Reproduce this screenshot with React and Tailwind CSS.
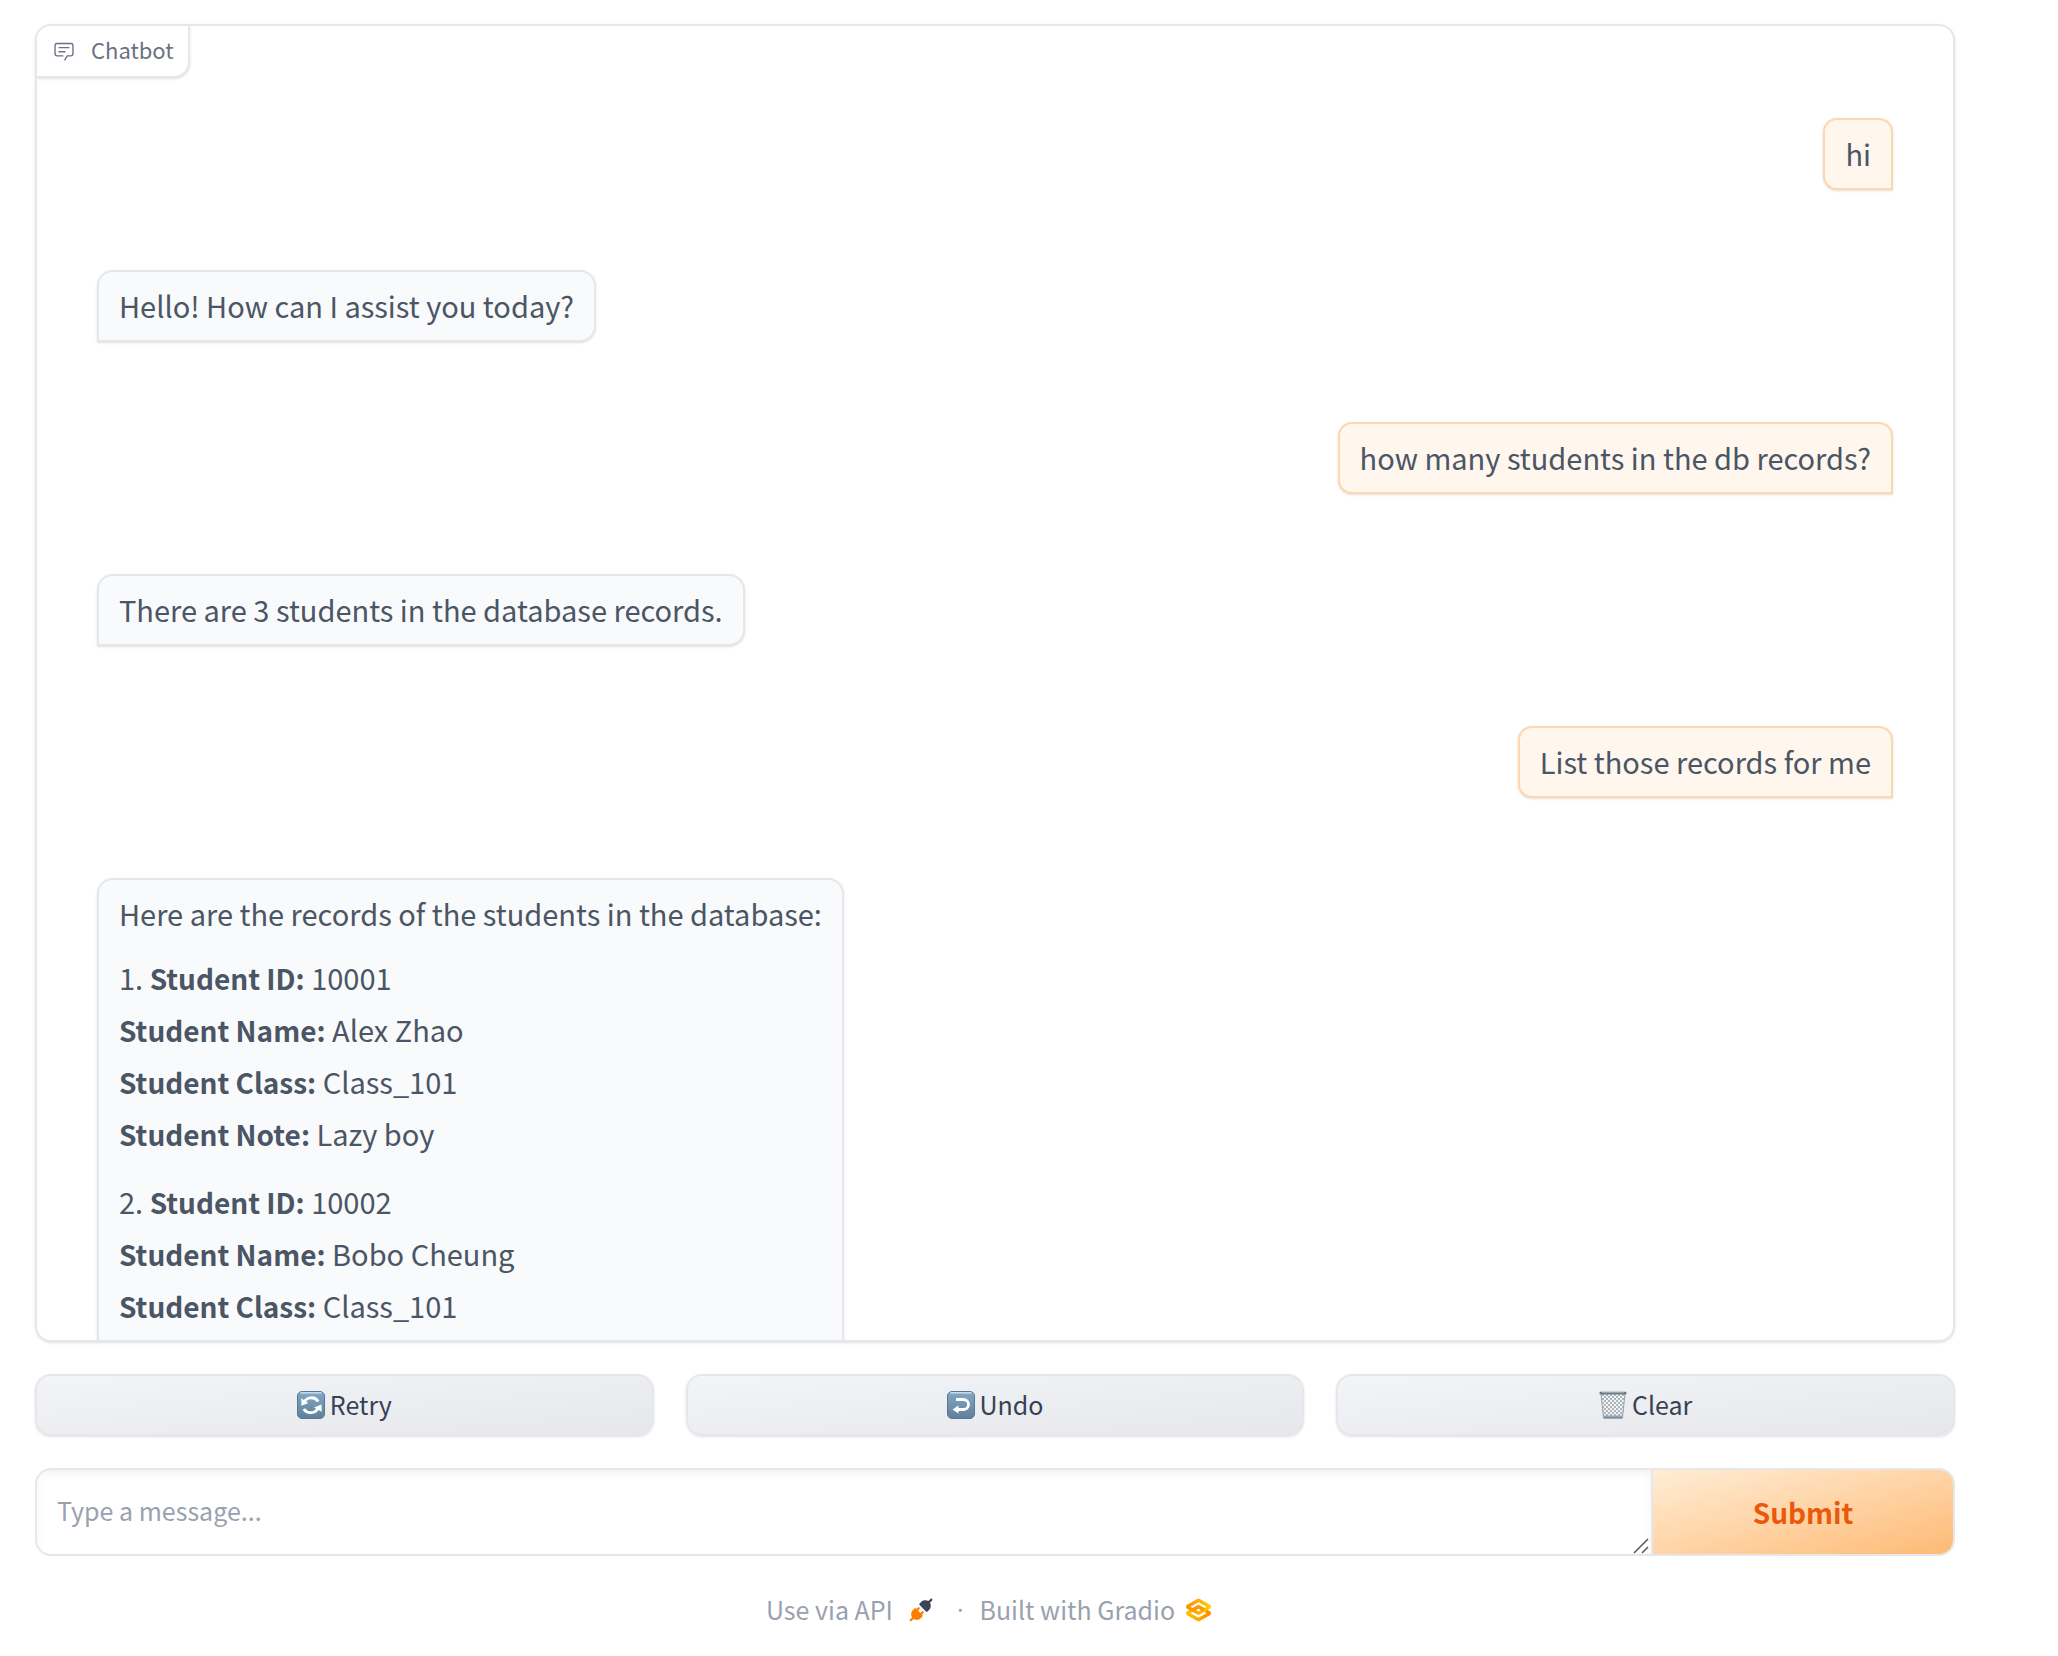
import React from "react";

const FONT = "font-['Noto_Sans_CJK_SC',sans-serif]";

function ChatIcon() {
  return (
    <svg viewBox="0 0 32 32" className="size-[22px]" fill="currentColor" aria-hidden="true">
      <path d="M17.74 30L16 29l4-7h6a2 2 0 0 0 2-2V8a2 2 0 0 0-2-2H6a2 2 0 0 0-2 2v12a2 2 0 0 0 2 2h9v2H6a4 4 0 0 1-4-4V8a4 4 0 0 1 4-4h20a4 4 0 0 1 4 4v12a4 4 0 0 1-4 4h-4.84Z" />
      <path d="M8 10h16v2H8zm0 6h10v2H8z" />
    </svg>
  );
}

function Tile({ id, children }) {
  return (
    <svg viewBox="0 0 28 28" className="size-7" aria-hidden="true">
      <defs>
        <linearGradient id={id} x1="0" y1="0" x2="0" y2="1">
          <stop offset="0" stopColor="#8fb0cb" />
          <stop offset="0.15" stopColor="#7ea2c0" />
          <stop offset="1" stopColor="#5f7f9b" />
        </linearGradient>
      </defs>
      <rect x="0.5" y="0.5" width="27" height="27" rx="4.5" fill={`url(#${id})`} stroke="#587793" />
      <path d="M4 1.8h20" stroke="#c6dbea" strokeWidth="1.4" strokeLinecap="round" />
      {children}
    </svg>
  );
}

function RetryIcon() {
  return (
    <Tile id="tile-retry">
      <g fill="none" stroke="#fff" strokeWidth="3">
        <path d="M7 11.5C9.5 6 17.5 5 21.2 10.5" />
        <path d="M21 17C18.5 22.6 10.5 23.4 6.8 18" />
      </g>
      <path d="M4.2 7.3l.3 7.4 6.8-2.6z" fill="#fff" />
      <path d="M24.500 13.500l.2 7.300-7.800-4.400z" fill="#fff" />
    </Tile>
  );
}

function UndoIcon() {
  return (
    <Tile id="tile-undo">
      <path d="M9 8.500h7.500a5 5 0 0 1 0 10H11" fill="none" stroke="#fff" strokeWidth="2.800" />
      <path d="M5.500 18.500l6-4v8z" fill="#fff" />
    </Tile>
  );
}

function TrashIcon() {
  return (
    <svg viewBox="0 0 28 28" className="size-7" aria-hidden="true">
      <defs>
        <pattern id="wire-mesh" width="4" height="4" patternUnits="userSpaceOnUse">
          <rect width="4" height="4" fill="#f1f3f4" />
          <path d="M0 0l4 4M4 0L0 4" stroke="#9aa3aa" strokeWidth="0.8" />
        </pattern>
      </defs>
      <path d="M2 2.500h24L23.500 26.500H4.500z" fill="url(#wire-mesh)" stroke="#97a2aa" />
      <path d="M4.300 24.500h19.400l-.4 2.700H4.700z" fill="#8ea6ba" />
      <path d="M4.500 27h19" stroke="#6d7780" />
      <rect x="0.500" y="0.800" width="27" height="2.600" rx="1" fill="#6e7a84" />
      <path d="M3 1.500h22" stroke="#a3b2be" strokeWidth="0.800" />
    </svg>
  );
}

function PlugIcon() {
  return (
    <svg viewBox="0 0 28 28" className="size-6" aria-hidden="true">
      <path
        fill="#3c4555"
        d="M26.9425 2.94265C27.4632 2.42195 27.4632 1.57773 26.9425 1.05703C26.4218 0.536329 25.5776 0.536329 25.0569 1.05703L22.5713 3.54256C21.1213 2.59333 19.5367 2.43378 18.1753 2.64006C16.5495 2.88638 15.1127 3.66838 14.3905 4.39053L12.3905 6.39053C12.1405 6.64058 12 6.97972 12 7.33334C12 7.68697 12.1405 8.0261 12.3905 8.27615L19.7239 15.6095C20.2446 16.1302 21.0888 16.1302 21.6095 15.6095L23.6095 13.6095C24.3316 12.8873 25.1136 11.4505 25.36 9.82475C25.5663 8.46312 25.4066 6.87827 24.4571 5.42807L26.9425 2.94265Z"
      />
      <path
        fill="#ff7c00"
        d="M12.276 12.9426C12.7967 12.4219 12.7967 11.5777 12.276 11.057C11.7553 10.5363 10.9111 10.5363 10.3904 11.057L8.6665 12.7809L8.2761 12.3905C7.7554 11.8698 6.9112 11.8698 6.3905 12.3905L4.3905 14.3905C3.6684 15.1127 2.8864 16.5495 2.64 18.1752C2.4338 19.5368 2.5933 21.1216 3.5426 22.5713L1.057 25.0569C0.5363 25.5776 0.5363 26.4218 1.057 26.9425C1.5777 27.4632 2.4219 27.4632 2.9426 26.9425L5.4282 24.4571C6.8784 25.4066 8.4632 25.5663 9.8248 25.36C11.4505 25.1136 12.8873 24.3316 13.6095 23.6095L15.6095 21.6095C16.1302 21.0888 16.1302 20.2446 15.6095 19.7239L15.2188 19.3332L16.9426 17.6093C17.4633 17.0886 17.4633 16.2444 16.9426 15.7237C16.4219 15.203 15.5777 15.203 15.057 15.7237L13.3332 17.4475L10.5521 14.6665L12.276 12.9426Z"
      />
    </svg>
  );
}

function GradioLogo() {
  return (
    <svg viewBox="50 78 475 420" className="h-6 w-[27px]" fill="none" aria-hidden="true">
      <defs>
        <linearGradient id="logo-top" x1="86" y1="231" x2="489" y2="231" gradientUnits="userSpaceOnUse">
          <stop stopColor="#ff8f00" />
          <stop offset="1" stopColor="#ffd000" />
        </linearGradient>
        <linearGradient id="logo-bottom" x1="86" y1="344" x2="489" y2="344" gradientUnits="userSpaceOnUse">
          <stop stopColor="#ffc400" />
          <stop offset="1" stopColor="#ff8a00" />
        </linearGradient>
      </defs>
      <path d="M287.5 229L86 344.5L287.5 460L489 344.5Z" stroke="url(#logo-bottom)" strokeWidth="59" strokeLinejoin="bevel" />
      <path d="M287.5 116L86 231.5L287.5 347L489 231.5Z" stroke="url(#logo-top)" strokeWidth="59" strokeLinejoin="bevel" />
      <path d="M190 287L287.500 229L385 287" stroke="#ff9800" strokeWidth="59" strokeLinejoin="bevel" />
    </svg>
  );
}

function UserMessage({ children }) {
  return (
    <div className="self-end rounded-[14px] rounded-br-none border-2 border-[#fed7aa] bg-[#fff7ed] px-5 pt-[7px] pb-[9px] shadow-sm">
      {children}
    </div>
  );
}

function BotMessage({ children }) {
  return (
    <div className="self-start rounded-2xl rounded-bl-none border-2 border-gray-200 bg-[#f9fafb] px-5 pt-[7px] pb-[9px] shadow-sm">
      {children}
    </div>
  );
}

function Field({ label, children }) {
  return (
    <>
      <strong className="text-[28px] leading-none">{label}:</strong> {children}
    </>
  );
}

function Record({ number, id, name, group, note }) {
  return (
    <p>
      {number}. <Field label="Student ID">{id}</Field>
      <br />
      <Field label="Student Name">{name}</Field>
      <br />
      <Field label="Student Class">{group}</Field>
      <br />
      {note && <Field label="Student Note">{note}</Field>}
    </p>
  );
}

function ActionButton({ icon, children }) {
  return (
    <button
      type="button"
      className="flex h-[62px] flex-1 items-center justify-center gap-[5px] rounded-2xl border-2 border-gray-200 bg-linear-to-br from-gray-100 to-gray-200 text-[25px] text-gray-700 shadow-sm"
    >
      {icon}
      <span>{children}</span>
    </button>
  );
}

export default function App() {
  return (
    <div className={`${FONT} bg-white pt-6 pr-[103px] pl-[35px] text-gray-600`}>
      <main className="flex flex-col gap-8">
        <section
          aria-label="Chatbot"
          className="relative h-[1318px] overflow-hidden rounded-2xl border-2 border-gray-200 shadow-sm"
        >
          <h1 className="absolute top-0 left-0 box-content flex h-[50px] items-center gap-4 rounded-br-2xl border-r-2 border-b-2 border-gray-200 bg-white pr-3.5 pl-4 text-[22px] font-normal text-gray-500 shadow-sm">
            <ChatIcon />
            <span className="pb-[3px]">Chatbot</span>
          </h1>
          <div className="flex flex-col gap-20 px-[60px] pt-[92px] text-[29px] leading-[52px]">
            <UserMessage>hi</UserMessage>
            <BotMessage>Hello! How can I assist you today?</BotMessage>
            <UserMessage>how many students in the db records?</UserMessage>
            <BotMessage>There are 3 students in the database records.</BotMessage>
            <UserMessage>List those records for me</UserMessage>
            <BotMessage>
              <p className="mb-3">Here are the records of the students in the database:</p>
              <div className="flex flex-col gap-4 pb-14">
                <Record number={1} id="10001" name="Alex Zhao" group="Class_101" note="Lazy boy" />
                <Record number={2} id="10002" name="Bobo Cheung" group="Class_101" />
              </div>
            </BotMessage>
          </div>
        </section>

        <div className="flex gap-8">
          <ActionButton icon={<RetryIcon />}>Retry</ActionButton>
          <ActionButton icon={<UndoIcon />}>Undo</ActionButton>
          <ActionButton icon={<TrashIcon />}>Clear</ActionButton>
        </div>

        <form
          className="flex overflow-hidden rounded-2xl border-2 border-gray-200"
          onSubmit={(e) => e.preventDefault()}
        >
          <textarea
            aria-label="Message"
            rows={1}
            placeholder="Type a message..."
            className="h-[84px] flex-1 resize-none px-5 py-5 text-[25px] leading-10 shadow-[inset_0_4px_8px_0_rgba(0,0,0,0.05)] outline-none placeholder:text-gray-400"
          />
          <div className="flex w-0 items-end justify-end">
            <svg viewBox="0 0 16 16" className="mr-0.5 size-4 shrink-0" stroke="#555" strokeWidth="1.500" aria-hidden="true">
              <path d="M1 15L15 1M9 15l6-6" />
            </svg>
          </div>
          <button
            type="submit"
            className="w-[302px] border-l-2 border-gray-200 bg-linear-to-br from-[#ffedd5] to-[#fdba74] text-[28px] font-bold text-[#ea580c]"
          >
            Submit
          </button>
        </form>
      </main>

      <footer className="mt-8 flex h-11 items-center justify-center pr-3 text-[25px] text-gray-400">
        <a href="#api" className="flex items-center gap-4">
          Use via API <PlugIcon />
        </a>
        <span className="mr-4 ml-6 font-['Open_Sans',sans-serif]">·</span>
        <a href="#gradio" className="flex items-center gap-2.5">
          Built with Gradio <GradioLogo />
        </a>
      </footer>
    </div>
  );
}
